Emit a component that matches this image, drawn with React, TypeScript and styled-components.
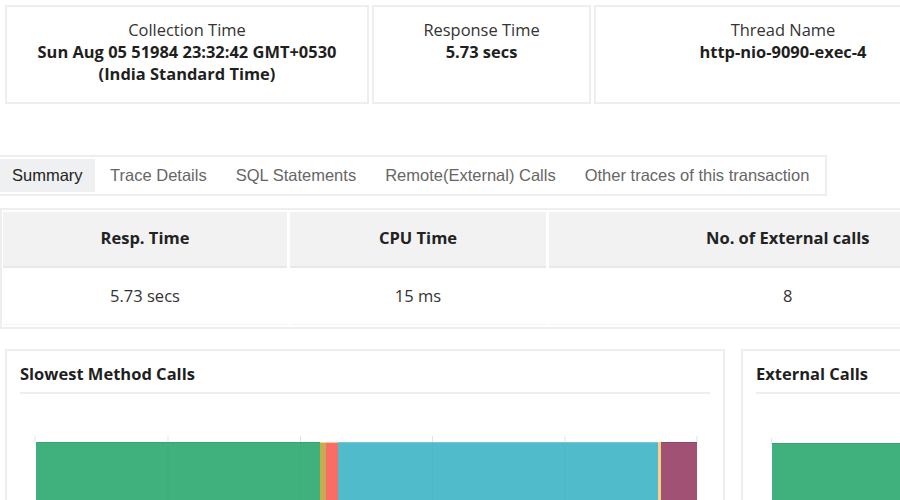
import React from "react";
import styled, { createGlobalStyle } from "styled-components";

const Global = createGlobalStyle`
  html, body { margin: 0; padding: 0; background: #fff; width: 900px; height: 500px; overflow: hidden; }
  body { font-family: "Open Sans", "Liberation Sans", sans-serif; color: #222; }
`;

const Page = styled.div`
  width: 900px;
  height: 500px;
  overflow: hidden;
`;

const InfoRow = styled.div`
  display: grid;
  grid-template-columns: 364px 219px 378px;
  column-gap: 3px;
  width: 970px;
  padding: 5px 0 0 5px;
`;

const InfoCard = styled.div`
  box-sizing: border-box;
  height: 99px;
  border: 2px solid #eeeeee;
  padding: 12px 20px 0;
  text-align: center;
  font-size: 16.45px;
  line-height: 22px;
`;

const InfoLabel = styled.div`
  color: #333;
`;

const InfoValue = styled.div`
  font-weight: 700;
  color: #1f1f1f;
`;

const TabBar = styled.div`
  box-sizing: border-box;
  display: flex;
  align-items: center;
  width: 827px;
  height: 41px;
  margin-top: 51px;
  border: 2px solid #eeeeee;
  border-left: none;
`;

const Tab = styled.div<{ $active?: boolean }>`
  display: flex;
  align-items: center;
  height: 33px;
  padding-left: ${(p) => (p.$active ? "12px" : "15px")};
  padding-right: ${(p) => (p.$active ? "12.5px" : "14px")};
  font-family: "Liberation Sans", Arial, sans-serif;
  font-size: 16.5px;
  color: ${(p) => (p.$active ? "#222" : "#666")};
  background: ${(p) => (p.$active ? "#eff0f1" : "transparent")};
  white-space: nowrap;
`;

const Table = styled.div`
  box-sizing: border-box;
  width: 960px;
  height: 121px;
  margin-top: 12px;
  padding: 2px 0 0 1px;
  border: 2px solid #eeeeee;
  display: grid;
  grid-template-columns: 284px 256px 600px;
  grid-template-rows: 56px 57px;
  column-gap: 3px;
`;

const HeadCell = styled.div`
  display: flex;
  align-items: center;
  justify-content: center;
  background: #f2f2f2;
  border-bottom: 2px solid #e8e8e8;
  box-sizing: border-box;
  padding-bottom: 4px;
  font-size: 16.5px;
  font-weight: 700;
  color: #222;
`;

const BodyCell = styled.div`
  display: flex;
  align-items: center;
  justify-content: center;
  box-sizing: border-box;
  border-bottom: 1px solid #f5f5f5;
  padding-bottom: 2px;
  font-size: 16.5px;
  color: #333;
`;

const WideHead = styled(HeadCell)`
  justify-content: flex-start;
  padding-left: 157px;
`;

const WideBody = styled(BodyCell)`
  justify-content: flex-start;
  padding-left: 234px;
`;

const Panels = styled.div`
  display: grid;
  grid-template-columns: 720px 400px;
  column-gap: 16px;
  width: 1140px;
  margin-top: 20px;
  padding-left: 5px;
`;

const Panel = styled.div`
  box-sizing: border-box;
  height: 200px;
  border: 2px solid #eeeeee;
  padding: 0 13px;
`;

const PanelTitle = styled.div`
  height: 43px;
  line-height: 46px;
  box-sizing: border-box;
  border-bottom: 2px solid #eeeeee;
  font-size: 16.5px;
  font-weight: 700;
  color: #1f1f1f;
`;

const ChartSvg = styled.svg`
  display: block;
`;

const ticks = [35, 168, 300.5, 432.5, 565, 697];
const segments = [
  { x: 36, w: 284, fill: "#40b07c", edge: "#37a571" },
  { x: 320, w: 6, fill: "#c7ab50", edge: "#f5d596" },
  { x: 326, w: 12, fill: "#f96e64", edge: "#f8c992" },
  { x: 338, w: 320, fill: "#50bbca", edge: "#72c8d3" },
  { x: 658, w: 3, fill: "#f7cf8f", edge: "#f7cf8f" },
  { x: 661, w: 36, fill: "#a15274", edge: "#8f4666" },
];

export default function App() {
  return (
    <Page>
      <Global />
      <InfoRow>
        <InfoCard>
          <InfoLabel>Collection Time</InfoLabel>
          <InfoValue>Sun Aug 05 51984 23:32:42 GMT+0530 (India Standard Time)</InfoValue>
        </InfoCard>
        <InfoCard>
          <InfoLabel>Response Time</InfoLabel>
          <InfoValue>5.73 secs</InfoValue>
        </InfoCard>
        <InfoCard>
          <InfoLabel>Thread Name</InfoLabel>
          <InfoValue>http-nio-9090-exec-4</InfoValue>
        </InfoCard>
      </InfoRow>
      <TabBar>
        <Tab $active>Summary</Tab>
        <Tab>Trace Details</Tab>
        <Tab>SQL Statements</Tab>
        <Tab>Remote(External) Calls</Tab>
        <Tab>Other traces of this transaction</Tab>
      </TabBar>
      <Table>
        <HeadCell>Resp. Time</HeadCell>
        <HeadCell>CPU Time</HeadCell>
        <WideHead>No. of External calls</WideHead>
        <BodyCell>5.73 secs</BodyCell>
        <BodyCell>15 ms</BodyCell>
        <WideBody>8</WideBody>
      </Table>
      <Panels>
        <Panel>
          <PanelTitle>Slowest Method Calls</PanelTitle>
          <ChartSvg width="690" height="107" viewBox="20 394 690 107">
            {ticks.map((t) => (
              <rect key={t} x={t - 0.5} y={436} width={1} height={7} fill="#e3e3e3" />
            ))}
            {segments.map((s) => (
              <rect key={s.x} x={s.x} y={442} width={s.w} height={60} fill={s.fill} />
            ))}
            {segments.map((s) => (
              <rect key={s.x} x={s.x} y={442} width={s.w} height={1} fill={s.edge} />
            ))}
            {ticks.slice(1, 5).map((t) => (
              <rect key={t} x={t - 0.5} y={443} width={1} height={60} fill="#000" opacity={0.02} />
            ))}
          </ChartSvg>
        </Panel>
        <Panel>
          <PanelTitle>External Calls</PanelTitle>
          <ChartSvg width="370" height="107" viewBox="756 394 370 107">
            <rect x={771} y={438} width={1} height={6} fill="#e3e3e3" />
            <rect x={772} y={443} width={355} height={60} fill="#40b07c" />
            <rect x={772} y={443} width={355} height={1} fill="#37a571" />
          </ChartSvg>
        </Panel>
      </Panels>
    </Page>
  );
}
